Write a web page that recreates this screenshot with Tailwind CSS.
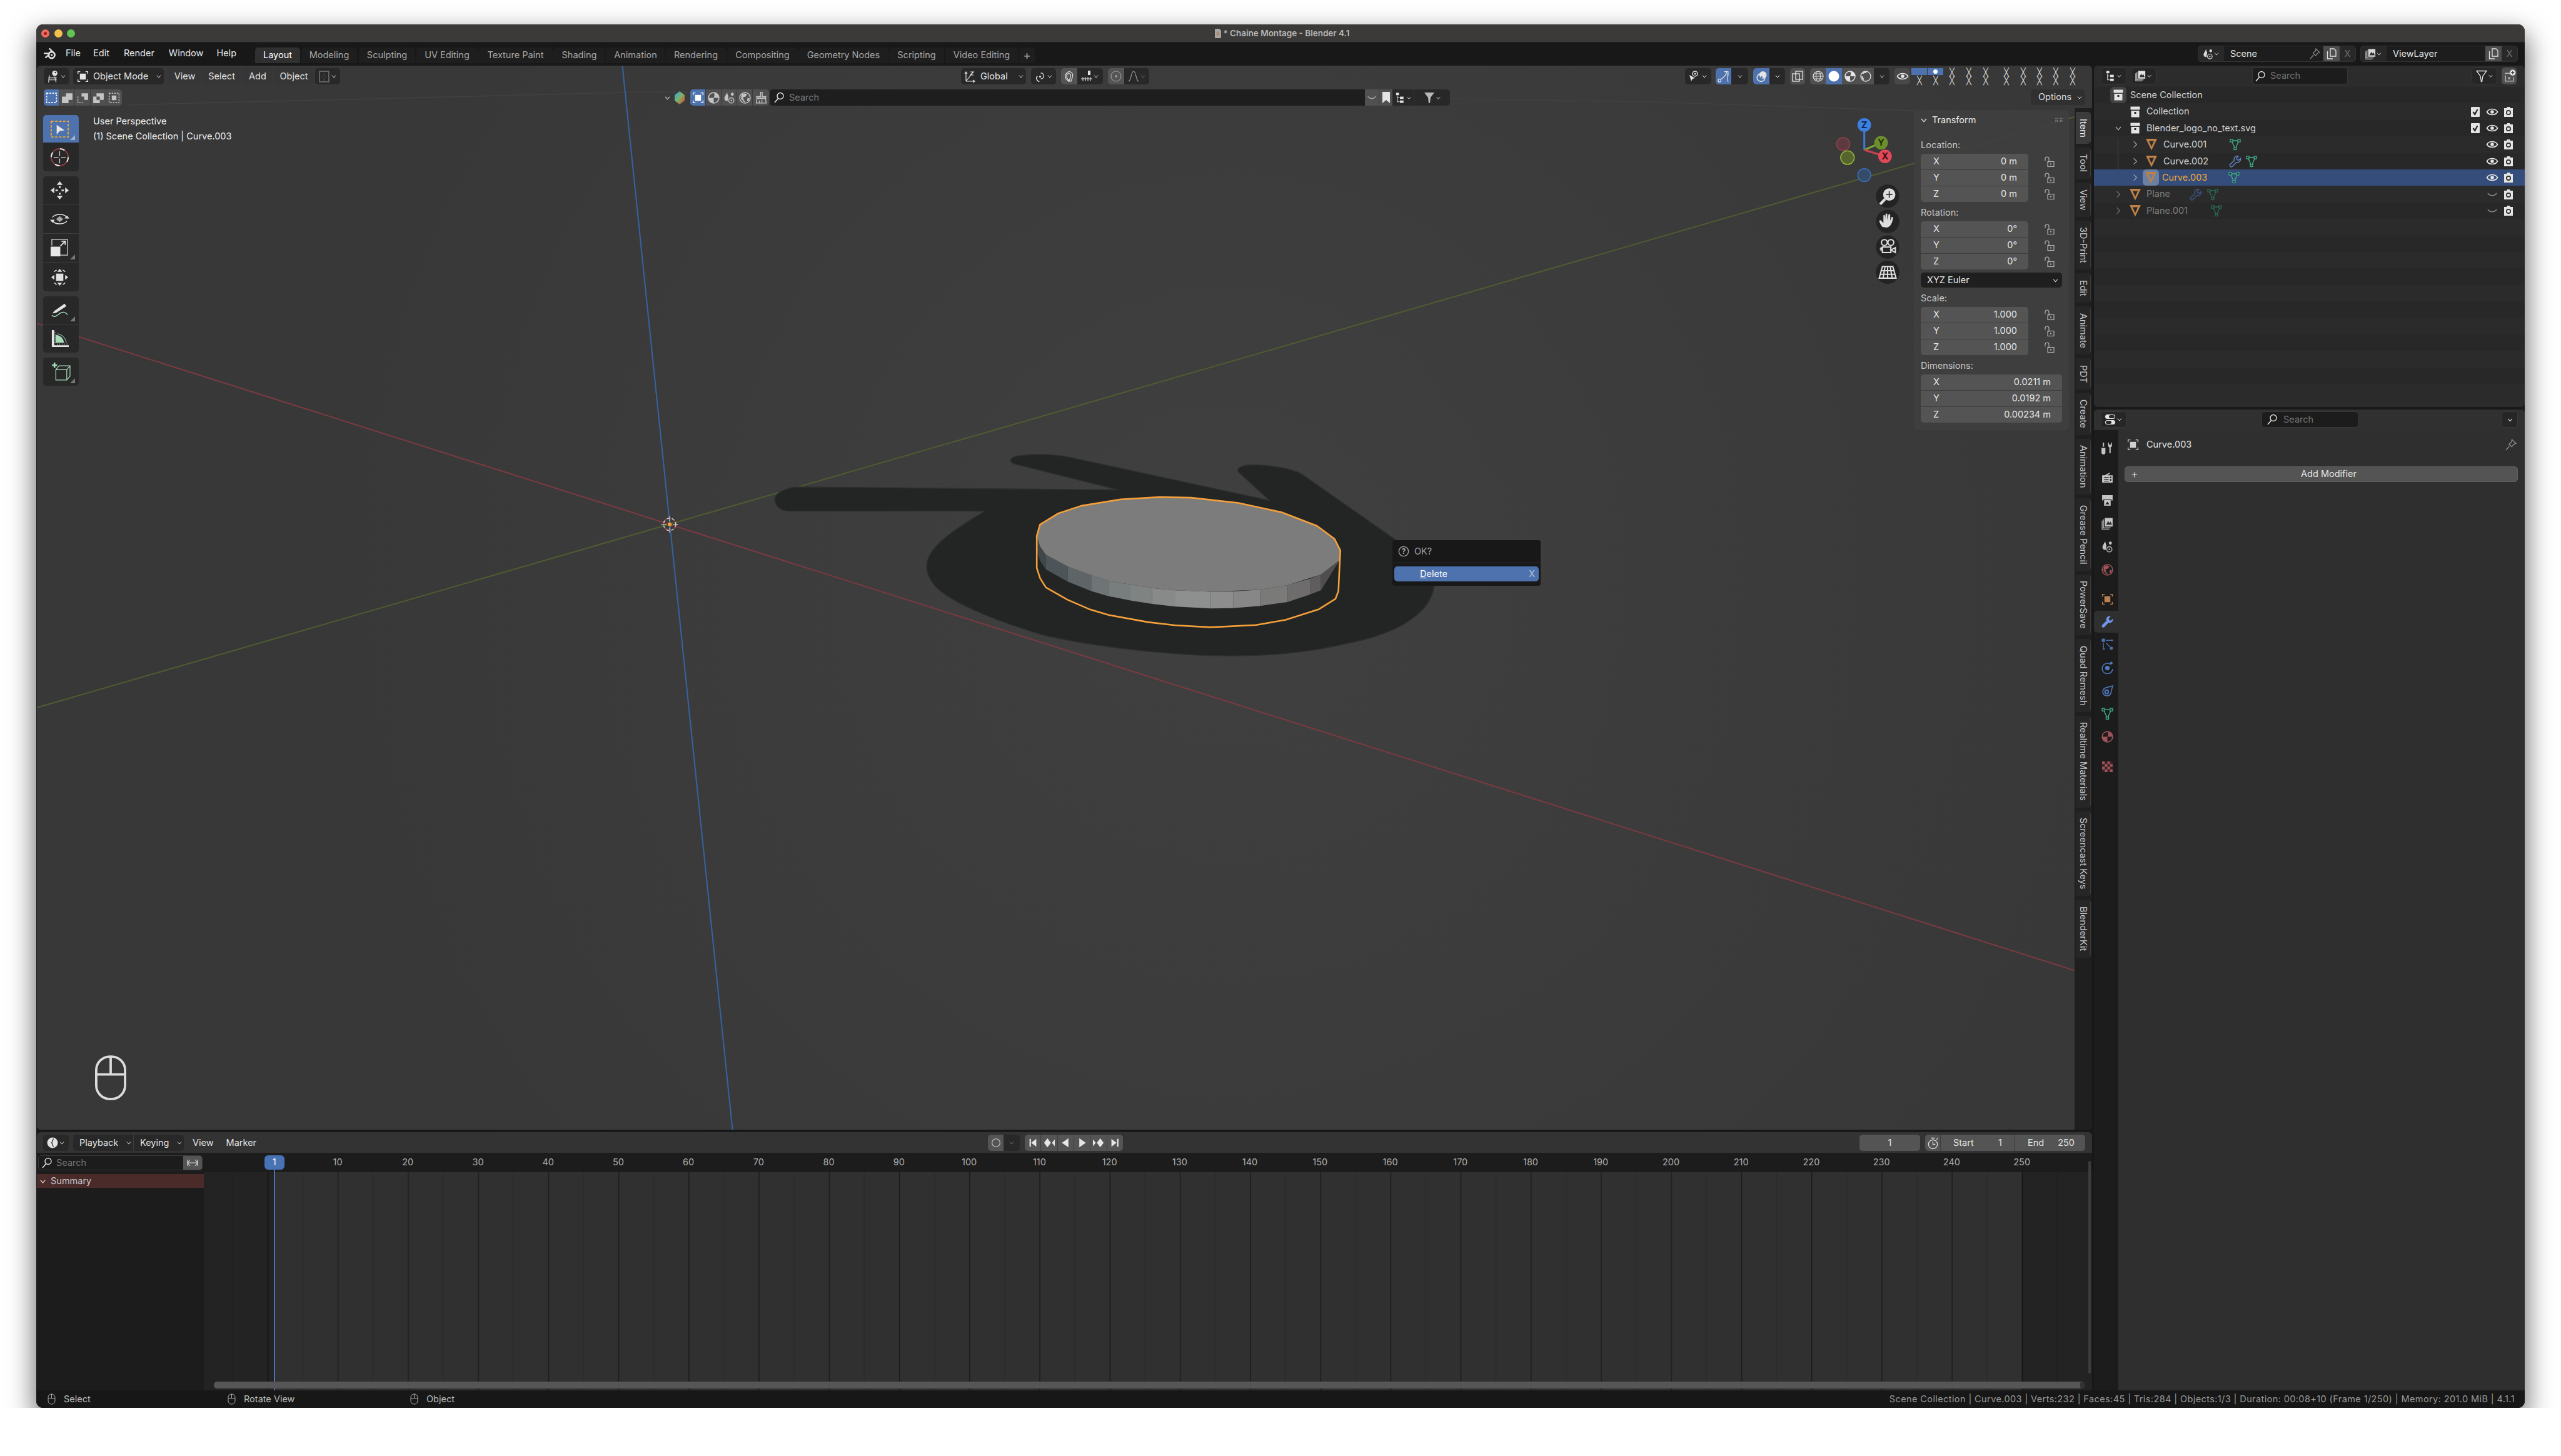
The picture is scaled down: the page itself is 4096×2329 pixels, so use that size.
<!DOCTYPE html>
<html><head><meta charset="utf-8"><title>Chaine Montage - Blender 4.1</title>
<script src="https://cdn.jsdelivr.net/npm/@tailwindcss/browser@4"></script></head>
<body class="bg-white overflow-hidden">
<svg class="hidden" width="0" height="0">
<defs>
<symbol id="chev" viewBox="0 0 20 20"><path d="M5 7.5l5 6 5-6" fill="none" stroke="currentColor" stroke-width="1.6"/></symbol>
<symbol id="chevr" viewBox="0 0 20 20"><path d="M7 4l6 6-6 6" fill="none" stroke="currentColor" stroke-width="1.4"/></symbol>
<symbol id="search" viewBox="0 0 20 20"><circle cx="12" cy="7.5" r="5" fill="none" stroke="currentColor" stroke-width="1.4"/><path d="M8.5 11.5L3 18" stroke="currentColor" stroke-width="1.6"/></symbol>
<symbol id="blogo" viewBox="0 0 20 20"><circle cx="12" cy="11.5" r="4.7" fill="none" stroke="currentColor" stroke-width="2.6"/><circle cx="12" cy="11.5" r="1.6" fill="currentColor"/><path d="M1 9h7M9 2l5 5M3 15l5-4" stroke="currentColor" stroke-width="2.2" stroke-linecap="round"/></symbol>
<symbol id="v3d" viewBox="0 0 20 20"><circle cx="12" cy="5" r="4" fill="currentColor"/><circle cx="13" cy="3.8" r="1.2" fill="#333"/><path d="M2 12h13M4 8l-1.500 11M12 10l2 9M2 15h13" stroke="currentColor" stroke-width="1.1" fill="none"/></symbol>
<symbol id="obj" viewBox="0 0 20 20"><path d="M2.500 6V2.500H6M14 2.500h3.500V6M17.500 14v3.500H14M6 17.500H2.500V14" fill="none" stroke="currentColor" stroke-width="1.3"/><rect x="5.500" y="5.500" width="9" height="9" fill="currentColor"/></symbol>
<symbol id="bolt" viewBox="0 0 20 20"><rect x="3" y="2" width="14" height="16" fill="none" stroke="#666" stroke-width="1.8"/><path d="M11 4L7 10.500h3L9 17l4-8h-3z" fill="#1f1f1f" stroke="#555" stroke-width=".6"/></symbol>
<symbol id="sset" viewBox="0 0 20 20"><rect x="2.500" y="3" width="15" height="14" fill="none" stroke="currentColor" stroke-width="1.5" stroke-dasharray="2.500 1.800"/></symbol>
<symbol id="sext" viewBox="0 0 20 20"><path d="M2 8h6V3h10v10h-6v5H2z" fill="currentColor"/></symbol>
<symbol id="ssub" viewBox="0 0 20 20"><path d="M8 3h10v10h-6V8H8z" fill="currentColor"/><path d="M2.500 8v9.500H12" fill="none" stroke="currentColor" stroke-width="1.400" stroke-dasharray="2.200 1.600"/></symbol>
<symbol id="sdif" viewBox="0 0 20 20"><path fill-rule="evenodd" d="M7 3h11v10h-6v5H2V8h5zM7 8v5h5V8z" fill="currentColor"/></symbol>
<symbol id="sint" viewBox="0 0 20 20"><rect x="2.500" y="3" width="15" height="14" fill="none" stroke="currentColor" stroke-width="1.400" stroke-dasharray="2.200 1.800"/><rect x="6.500" y="6.500" width="7" height="7" fill="currentColor"/></symbol>
<symbol id="mat" viewBox="0 0 20 20"><circle cx="10" cy="10" r="8" fill="none" stroke="currentColor" stroke-width="1.500"/><path d="M10 2a8 8 0 0 1 0 8h8a8 8 0 0 0-8-8zM10 10H2a8 8 0 0 0 8 8z" fill="currentColor"/></symbol>
<symbol id="scene" viewBox="0 0 20 20"><path d="M6.500 2C5 6 2.500 8 2.500 11a4 4 0 0 0 5 3.800C7 12 9 9.500 8.500 8z" fill="currentColor"/><circle cx="14.500" cy="4.500" r="2.300" fill="currentColor"/><circle cx="13" cy="14" r="4" fill="none" stroke="currentColor" stroke-width="1.300"/><circle cx="13" cy="14" r="1.200" fill="currentColor"/></symbol>
<symbol id="world" viewBox="0 0 20 20"><circle cx="10" cy="10" r="8" fill="none" stroke="currentColor" stroke-width="1.400"/><path d="M5 4l5-1 3 2-2 3-4 1 1 4 3 4-3-1-4-5zM14 10l3 1-2 4-2-1z" fill="currentColor"/></symbol>
<symbol id="brush" viewBox="0 0 20 20"><path d="M9 1.500h2.500V8H17v2H3V8h6zM3.500 11h13l1 7h-15zM7 14v4M11 13v5" fill="none" stroke="currentColor" stroke-width="1.300"/></symbol>
<symbol id="xf" viewBox="0 0 20 20"><path d="M4 18V3M2 6l2-3 2 3M4 18h14M15 16l3 2-3 2M4 18L15 4M11 3h5l-5 5h5" fill="none" stroke="currentColor" stroke-width="1.200"/></symbol>
<symbol id="pivot" viewBox="0 0 20 20"><path d="M11 4.500a4.500 4.500 0 1 1 0 9M9 17.500A5 5 0 0 1 6 9" fill="none" stroke="currentColor" stroke-width="1.300"/><circle cx="10" cy="10" r="1.500" fill="currentColor"/></symbol>
<symbol id="magnet" viewBox="0 0 20 20"><path d="M9 18c-3-2-6-5-5-9 1-5 5-7 8-6s5 5 3 9l-2 6h-3l2-7c1-3 0-5-1-5-2-1-4 0-5 3-.5 3 1 5 3 7z" fill="none" stroke="currentColor" stroke-width="1.200"/></symbol>
<symbol id="snap" viewBox="0 0 20 20"><rect x="12" y="1" width="4" height="7" fill="currentColor"/><path d="M1 14h18M4 11v7M8 11v7M12 11v7M16 11v7" stroke="currentColor" stroke-width="1"/></symbol>
<symbol id="prop" viewBox="0 0 20 20"><circle cx="10" cy="10" r="8" fill="none" stroke="currentColor" stroke-width="1.200"/><circle cx="10" cy="10" r="2" fill="currentColor"/></symbol>
<symbol id="curve" viewBox="0 0 20 20"><path d="M2 18c4 0 4-16 8-16s4 16 8 16" fill="none" stroke="currentColor" stroke-width="1.200"/></symbol>
<symbol id="bookmark" viewBox="0 0 20 20"><path d="M4 1h12v18l-6-5-6 5z" fill="currentColor"/></symbol>
<symbol id="tree" viewBox="0 0 20 20"><rect x="3" y="1.500" width="5" height="4" fill="currentColor"/><rect x="9.500" y="8" width="6" height="4" fill="currentColor"/><rect x="9.500" y="14.500" width="6" height="4" fill="currentColor"/><path d="M5 6v10.500h4M5 10h4" fill="none" stroke="currentColor" stroke-width="1.100"/></symbol>
<symbol id="funnel" viewBox="0 0 20 20"><path d="M2 2h16l-6 8-1 9h-2L8 10z" fill="currentColor"/></symbol>
<symbol id="funnelo" viewBox="0 0 20 20"><path d="M2 2h16l-6 8-1.500 9h-1L8 10z" fill="none" stroke="currentColor" stroke-width="1.300"/></symbol>
<symbol id="selectable" viewBox="0 0 20 20"><path d="M2 8l3 10 2-4 4-1z" fill="currentColor"/><circle cx="11" cy="6" r="4" fill="none" stroke="currentColor" stroke-width="1.500"/><circle cx="11" cy="6" r="1.500" fill="currentColor"/></symbol>
<symbol id="gizmo" viewBox="0 0 20 20"><circle cx="4" cy="16" r="2.200" fill="none" stroke="currentColor" stroke-width="1.200"/><path d="M6 14C11 11 14 8 15 3M11 2.500h6v6M17 3c-1 7-1 11 0 15" fill="none" stroke="currentColor" stroke-width="1.200"/></symbol>
<symbol id="overlay" viewBox="0 0 20 20"><circle cx="9" cy="11.500" r="6" fill="none" stroke="currentColor" stroke-width="1.500"/><circle cx="12" cy="7.500" r="5.500" fill="currentColor"/><circle cx="10" cy="11" r="1.500" fill="#4d72ae"/></symbol>
<symbol id="xray" viewBox="0 0 20 20"><rect x="7" y="2" width="11" height="13" fill="none" stroke="currentColor" stroke-width="1.300"/><rect x="2" y="6" width="11" height="12" fill="none" stroke="currentColor" stroke-width="1.300"/></symbol>
<symbol id="wire" viewBox="0 0 20 20"><circle cx="10" cy="10" r="8" fill="none" stroke="currentColor" stroke-width="1.200"/><ellipse cx="10" cy="10" rx="3.500" ry="8" fill="none" stroke="currentColor" stroke-width="1"/><path d="M2 10h16M3.500 6h13M3.500 14h13" stroke="currentColor" stroke-width="1"/></symbol>
<symbol id="solid" viewBox="0 0 20 20"><circle cx="10" cy="10" r="8.500" fill="currentColor"/></symbol>
<symbol id="render" viewBox="0 0 20 20"><circle cx="10" cy="10" r="8" fill="none" stroke="currentColor" stroke-width="1.300"/><path d="M5 6a6 6 0 0 1 6-2M4 10a6 6 0 0 0 3 5" fill="none" stroke="currentColor" stroke-width="1.800"/></symbol>
<symbol id="eye" viewBox="0 0 20 20"><path d="M1.500 10C5 4 15 4 18.500 10 15 16 5 16 1.500 10z" fill="none" stroke="currentColor" stroke-width="1.700"/><circle cx="10" cy="10" r="2.800" fill="currentColor"/></symbol>
<symbol id="eyeh" viewBox="0 0 20 20"><path d="M3 8c3 5 11 5 14 0" fill="none" stroke="currentColor" stroke-width="1.500"/></symbol>
<symbol id="cam" viewBox="0 0 20 20"><path d="M3 4h4l1-2h4l1 2h4v14H3z" fill="currentColor"/><circle cx="10" cy="11" r="4" fill="#2a2a2a"/><circle cx="10" cy="11" r="2.300" fill="currentColor"/></symbol>
<symbol id="check" viewBox="0 0 20 20"><rect x="3" y="2" width="14" height="16" fill="currentColor" rx="1"/><path d="M6.500 10l2.800 4 4.200-8" fill="none" stroke="#222" stroke-width="2.200"/></symbol>
<symbol id="coll" viewBox="0 0 20 20"><rect x="2.500" y="1.500" width="15" height="5" fill="currentColor"/><rect x="3.500" y="8" width="13" height="10.500" fill="currentColor"/><rect x="8.500" y="10" width="3" height="3" fill="#2a2a2a"/></symbol>
<symbol id="mesh" viewBox="0 0 20 20"><path fill-rule="evenodd" d="M1 1h18l-9 18.500zM6 4.500L10 13.500l4-9z" fill="currentColor"/></symbol>
<symbol id="data" viewBox="0 0 20 20"><path d="M4 4h12l-6 13z" fill="none" stroke="currentColor" stroke-width="1.300"/><g fill="#2a2a2a" stroke="currentColor" stroke-width="1.200"><rect x="2" y="2" width="4" height="4"/><rect x="14" y="2" width="4" height="4"/><rect x="8" y="15" width="4" height="3.500"/></g></symbol>
<symbol id="wrench" viewBox="0 0 20 20"><path d="M13 1.500a5 5 0 0 0-4.500 7L2 15a2.300 2.300 0 0 0 3.300 3.200l6.500-6.700a5 5 0 0 0 6.500-6l-3 2.800-2.500-.8-.7-2.500 2.700-3a5 5 0 0 0-1.800-.5z" fill="currentColor"/></symbol>
<symbol id="wrencho" viewBox="0 0 20 20"><path d="M13 1.500a5 5 0 0 0-4.500 7L2 15a2.300 2.300 0 0 0 3.300 3.200l6.500-6.700a5 5 0 0 0 6.500-6l-3 2.800-2.500-.8-.7-2.500 2.700-3a5 5 0 0 0-1.800-.5z" fill="none" stroke="currentColor" stroke-width="1.500"/></symbol>
<symbol id="lock" viewBox="0 0 20 20"><path d="M3 8V5a3 3 0 0 1 6 0v6" fill="none" stroke="currentColor" stroke-width="1.100"/><rect x="7" y="9.500" width="10" height="8" fill="none" stroke="currentColor" stroke-width="1.100"/><rect x="11" y="12.500" width="2" height="2" fill="currentColor"/></symbol>
<symbol id="layer" viewBox="0 0 20 20"><rect x="6" y="1.500" width="12" height="13" fill="currentColor"/><path d="M8 12l3-6 2 3 2-2 2 5z" fill="#333"/><path d="M4 3.500v13h11M2 5.500v13h11" fill="none" stroke="currentColor" stroke-width="1.100"/></symbol>
<symbol id="pin" viewBox="0 0 20 20"><path d="M3 18l5-6M12 2l6 6-3 1-3.500 4-4-4L11.500 5.500z" fill="none" stroke="currentColor" stroke-width="1.200"/></symbol>
<symbol id="copy" viewBox="0 0 20 20"><path d="M8 2h6l3 3v9H8z" fill="none" stroke="currentColor" stroke-width="1.300"/><path d="M3.500 6v12H12" fill="none" stroke="currentColor" stroke-width="1.300"/></symbol>
<symbol id="newcoll" viewBox="0 0 20 20"><circle cx="15" cy="5" r="4.500" fill="#e6e6e6"/><path d="M15 2.500v5M12.500 5h5" stroke="#333" stroke-width="1.200"/><path d="M3 6h8M4 9v9h12v-6" fill="none" stroke="currentColor" stroke-width="1.300"/><rect x="8" y="12" width="3" height="3" fill="currentColor"/></symbol>
<symbol id="toggles" viewBox="0 0 20 20"><rect x="2" y="2" width="16" height="7" rx="3.500" fill="currentColor"/><rect x="8" y="3" width="9" height="5" rx="2.500" fill="#2a2a2a"/><rect x="2" y="11" width="16" height="7" rx="3.500" fill="currentColor"/><rect x="3" y="12" width="9" height="5" rx="2.500" fill="#2a2a2a"/></symbol>
<symbol id="tool" viewBox="0 0 20 20"><path d="M4 2v6M2 11h4v6a2 2 0 0 1-4 0z" stroke="currentColor" stroke-width="2" fill="currentColor"/><path d="M11 2v4a3 3 0 0 0 2 3v9h2V9a3 3 0 0 0 2-3V2l-1.500 0v3h-3V2z" fill="currentColor"/></symbol>
<symbol id="rprop" viewBox="0 0 20 20"><path d="M2 7h4l7-4 1 1-4 3h8v11H2z" fill="currentColor"/><path d="M5 10h7M5 13h7M5 16h7" stroke="#1c1c1c" stroke-width="1"/><circle cx="15" cy="10" r="1.300" fill="#1c1c1c"/><circle cx="15" cy="14" r="1.300" fill="#1c1c1c"/></symbol>
<symbol id="output" viewBox="0 0 20 20"><path d="M2 2h16v8h-2v-2H4v2H2z" fill="currentColor"/><path d="M5 9h10v9H5z" fill="currentColor"/><path d="M7 16l3-4 3 4z" fill="#1c1c1c"/></symbol>
<symbol id="particles" viewBox="0 0 20 20"><circle cx="4" cy="4" r="2.800" fill="currentColor"/><circle cx="16" cy="16" r="2.500" fill="currentColor"/><circle cx="4.500" cy="17" r="1.500" fill="currentColor"/><circle cx="17" cy="4" r="1.500" fill="currentColor"/><path d="M8 4h8M4 8v8M8 8l6 6" stroke="currentColor" stroke-width="1.300"/></symbol>
<symbol id="physics" viewBox="0 0 20 20"><path d="M15 5.500a8 8 0 1 0 3 7" fill="none" stroke="currentColor" stroke-width="1.400"/><circle cx="10" cy="11" r="3.500" fill="currentColor"/><circle cx="16" cy="3.500" r="2" fill="currentColor"/></symbol>
<symbol id="constr" viewBox="0 0 20 20"><path d="M3 12a6.500 6.500 0 0 0 12 3L18 3 7 6a6.500 6.500 0 0 0-4 6z" fill="none" stroke="currentColor" stroke-width="1.500"/><circle cx="9" cy="12" r="2.700" fill="none" stroke="currentColor" stroke-width="2"/></symbol>
<symbol id="checker" viewBox="0 0 20 20"><rect x="2" y="2" width="16" height="16" fill="#3a2428"/><path d="M2 2h4v4H2zM10 2h4v4h-4zM6 6h4v4H6zM14 6h4v4h-4zM2 10h4v4H2zM10 10h4v4h-4zM6 14h4v4H6zM14 14h4v4h-4z" fill="currentColor"/></symbol>
<symbol id="mouse" viewBox="0 0 20 28"><rect x="1.500" y="1.500" width="17" height="25" rx="8" fill="none" stroke="currentColor" stroke-width="1.400"/><path d="M1.500 12h17M10 1.500V12" stroke="currentColor" stroke-width="1.400"/></symbol>
<symbol id="action" viewBox="0 0 20 20"><circle cx="10" cy="10" r="8.500" fill="currentColor"/><path d="M11 3l-3 7 3 7 1-1-2.500-6L12 4z" fill="#2a2a2a"/></symbol>
</defs>
</svg>

<div class="ml-[58px] mt-[39px] w-[3980px] h-[2213px] flex flex-col rounded-[11px] overflow-hidden bg-[#181818] shadow-[0_18px_40px_4px_rgba(0,0,0,0.55)] [font-family:Inter,sans-serif] text-[14.5px] leading-none text-[#e4e4e4]">

  <!-- title bar -->
  <div class="relative h-[30px] shrink-0 bg-[#3b3a38] flex items-center border-b border-black">
    <div class="flex gap-[7.700px] ml-[8px]">
      <span class="w-[13px] h-[13px] rounded-full bg-[#ef6a5e] flex items-center justify-center"><span class="w-[5px] h-[5px] rounded-full bg-[#96231a]"></span></span>
      <span class="w-[13px] h-[13px] rounded-full bg-[#f5bf4f]"></span>
      <span class="w-[13px] h-[13px] rounded-full bg-[#61c554]"></span>
    </div>
    <div class="ml-[1823px] flex items-center gap-[3px]">
      <svg width="10" height="15" viewBox="0 0 10 15"><path d="M0 1a1 1 0 0 1 1-1h6l3 3v11a1 1 0 0 1-1 1H1a1 1 0 0 1-1-1z" fill="#a4a4a4"/><circle cx="5" cy="8" r="2" fill="none" stroke="#c06a20" stroke-width="1"/></svg>
      <span class="text-[13.500px] font-semibold text-[#b8b8b8]">* Chaine Montage - Blender 4.1</span>
    </div>
  </div>

  <!-- top bar -->
  <div class="relative h-[36px] shrink-0 bg-[#181818] flex items-start">
    <svg class="ml-[12px] mt-[7px] text-[#e0e0e0]" width="21" height="21"><use href="#blogo"/></svg>
    <div class="flex text-[#e6e6e6] h-[36px] items-center pb-[3px]">
      <span class="ml-[14px]">File</span><span class="ml-[20px]">Edit</span><span class="ml-[23px]">Render</span><span class="ml-[23px]">Window</span><span class="ml-[21px]">Help</span>
    </div>
    <div class="absolute left-[350px] top-[7px] flex h-[25px] text-[#a8a8a8] items-stretch">
      <div class="w-[72px] bg-[#303030] rounded-t-[5px] flex items-center justify-center text-white">Layout</div>
      <div class="ml-[2px] w-[89px] bg-[#1e1e1e] rounded-t-[5px] flex items-center justify-center">Modeling</div>
      <div class="ml-[3px] w-[90px] bg-[#1e1e1e] rounded-t-[5px] flex items-center justify-center">Sculpting</div>
      <div class="ml-[2px] w-[98px] bg-[#1e1e1e] rounded-t-[5px] flex items-center justify-center">UV Editing</div>
      <div class="ml-[1px] w-[119px] bg-[#1e1e1e] rounded-t-[5px] flex items-center justify-center">Texture Paint</div>
      <div class="ml-[1px] w-[83px] bg-[#1e1e1e] rounded-t-[5px] flex items-center justify-center">Shading</div>
      <div class="ml-[1px] w-[95px] bg-[#1e1e1e] rounded-t-[5px] flex items-center justify-center">Animation</div>
      <div class="ml-[1px] w-[96px] bg-[#1e1e1e] rounded-t-[5px] flex items-center justify-center">Rendering</div>
      <div class="ml-[2px] w-[113px] bg-[#1e1e1e] rounded-t-[5px] flex items-center justify-center">Compositing</div>
      <div class="ml-[1px] w-[144px] bg-[#1e1e1e] rounded-t-[5px] flex items-center justify-center">Geometry Nodes</div>
      <div class="ml-[1px] w-[88px] bg-[#1e1e1e] rounded-t-[5px] flex items-center justify-center">Scripting</div>
      <div class="ml-[2px] w-[116px] bg-[#1e1e1e] rounded-t-[5px] flex items-center justify-center">Video Editing</div>
      <div class="ml-[2px] w-[25px] bg-[#1e1e1e] rounded-t-[5px] flex items-center justify-center text-[19px]">+</div>
    </div>
    <!-- scene / view layer -->
    <div class="absolute left-[3457px] top-[4px] h-[26px] w-[253px] flex rounded-[5px] overflow-hidden bg-[#282828] border border-[#333]">
      <div class="w-[41px] flex items-center justify-center text-[#d8d8d8]"><svg width="19" height="19"><use href="#scene"/></svg><svg class="-ml-[2px]" width="12" height="12"><use href="#chev"/></svg></div>
      <div class="w-[159px] bg-[#1d1d1d] flex items-center pl-[10px] relative">Scene<svg class="absolute right-[4px] text-[#8a8a8a]" width="20" height="20"><use href="#pin"/></svg></div>
      <div class="w-[26px] bg-[#4e4e4e] flex items-center justify-center"><svg width="20" height="20"><use href="#copy"/></svg></div>
      <div class="flex-1 flex items-center justify-center text-[#6f6f6f]">X</div>
    </div>
    <div class="absolute left-[3717px] top-[4px] h-[26px] w-[252px] flex rounded-[5px] overflow-hidden bg-[#282828] border border-[#333]">
      <div class="w-[41px] flex items-center justify-center text-[#d8d8d8]"><svg width="19" height="19"><use href="#layer"/></svg><svg class="-ml-[2px]" width="12" height="12"><use href="#chev"/></svg></div>
      <div class="w-[158px] bg-[#1d1d1d] flex items-center pl-[10px]">ViewLayer</div>
      <div class="w-[26px] bg-[#4e4e4e] flex items-center justify-center"><svg width="20" height="20"><use href="#copy"/></svg></div>
      <div class="flex-1 flex items-center justify-center text-[#6f6f6f]">X</div>
    </div>
  </div>

  <!-- main -->
  <div class="flex-1 min-h-0 flex pl-[1px]">
    <!-- left column -->
    <div class="w-[3287px] shrink-0 flex flex-col gap-[4px]">

      <!-- 3D viewport -->
      <div class="relative h-[1702px] shrink-0 rounded-[6px] overflow-hidden bg-[radial-gradient(circle_at_58%_48%,#404040,#383838_70%)]">
        <svg class="absolute inset-0" width="3287" height="1702" viewBox="116 202 6343 3285" preserveAspectRatio="none">
          <polyline points="398,323 2013,283 3600,290 5100,314 5904,341 6400,362" fill="none" stroke="#414141" stroke-width="3"/>
          <line x1="116" y1="998" x2="6457" y2="3012" stroke="#7a3a42" stroke-width="4"/>
          <line x1="116" y1="2184" x2="6457" y2="345" stroke="#4d5c30" stroke-width="4"/>
          <line x1="1923" y1="202" x2="2263" y2="3488" stroke="#35629e" stroke-width="4"/>
          <!-- shadow of the logo -->
          <path d="M2470 1503 L3455 1512 L3131 1431 C3110 1420 3125 1410 3150 1406 C3200 1400 3260 1402 3303 1411 L3921 1545 L3824 1456 C3815 1440 3850 1433 3873 1435 C3925 1436 3985 1445 4018 1462 L4315 1670 C4390 1730 4432 1770 4428 1808 C4420 1880 4340 1950 4164 1985 C4040 2015 3900 2026 3788 2024 C3640 2024 3400 2000 3230 1962 C3100 1925 2960 1870 2900 1820 C2860 1785 2850 1740 2880 1700 C2910 1655 2990 1610 3042 1577 L2430 1577 C2400 1572 2392 1550 2394 1537 C2400 1515 2440 1503 2470 1503 Z" fill="#232525" stroke="#2d2e2e" stroke-width="3" stroke-linejoin="round"/>
          <!-- disc sides -->
          <g stroke="none">
            <polygon points="3202,1654 3212,1686 3212,1730 3202,1700" fill="#3d4548"/>
            <polygon points="3212,1686 3230,1712 3230,1757 3212,1730" fill="#40484b"/>
            <polygon points="3230,1712 3297,1748 3297,1795 3230,1757" fill="#4e5559"/>
            <polygon points="3297,1748 3370,1775 3370,1824 3297,1795" fill="#5f6567"/>
            <polygon points="3370,1775 3424,1793 3424,1840 3370,1824" fill="#6f7576"/>
            <polygon points="3424,1793 3491,1804 3491,1853 3424,1840" fill="#787e7e"/>
            <polygon points="3491,1804 3558,1815 3558,1864 3491,1853" fill="#7f8483"/>
            <polygon points="3558,1815 3630,1822 3630,1872 3558,1864" fill="#878a89"/>
            <polygon points="3630,1822 3739,1826 3739,1878 3630,1872" fill="#8e908f"/>
            <polygon points="3739,1826 3808,1825 3808,1877 3739,1878" fill="#8c8d8c"/>
            <polygon points="3808,1825 3891,1820 3891,1870 3808,1877" fill="#868786"/>
            <polygon points="3891,1820 3976,1806 3976,1858 3891,1870" fill="#7a7a79"/>
            <polygon points="3976,1806 4045,1786 4045,1835 3976,1858" fill="#6e6c6c"/>
            <polygon points="4045,1786 4079,1773 4079,1822 4045,1835" fill="#605d5e"/>
            <polygon points="4079,1773 4137,1728 4079,1822" fill="#514e50"/>
          </g>
          <polygon points="3202,1654 3212,1619 3267,1585 3339,1561 3461,1541 3582,1534 3679,1536 3824,1552 3958,1581 4067,1623 4121,1663 4139,1699 4137,1728 4079,1773 3976,1806 3891,1820 3739,1826 3630,1822 3558,1815 3424,1793 3370,1775 3297,1748 3230,1712 3212,1686" fill="#7b7c7b"/>
          <polygon points="3202,1654 3212,1619 3267,1585 3339,1561 3461,1541 3582,1534 3679,1536 3824,1552 3958,1581 4067,1623 4121,1663 4139,1699 4136,1757 4133,1824 4124,1848 4073,1880 3970,1913 3879,1929 3739,1936 3630,1930 3545,1920 3424,1898 3364,1880 3297,1851 3230,1813 3212,1784 3202,1753" fill="none" stroke="#f5a03a" stroke-width="5" stroke-linejoin="round"/>
          <!-- 3D cursor -->
          <circle cx="2069" cy="1618" r="19" fill="none" stroke="#d8d8d8" stroke-width="3" stroke-dasharray="9 7"/>
          <circle cx="2069" cy="1618" r="19" fill="none" stroke="#b04a4a" stroke-width="3" stroke-dasharray="7 9" stroke-dashoffset="9"/>
          <path d="M2069 1592V1608M2069 1628V1644M2043 1618H2059M2079 1618H2095" stroke="#c8c8c8" stroke-width="2.500"/>
          <circle cx="2069" cy="1618" r="6" fill="#f39c32"/>
          <!-- nav gizmo -->
          <line x1="5756" y1="462" x2="5756" y2="385" stroke="#3a79d6" stroke-width="6"/>
          <line x1="5756" y1="462" x2="5808" y2="440" stroke="#7ba33a" stroke-width="6"/>
          <line x1="5756" y1="462" x2="5820" y2="482" stroke="#c9424e" stroke-width="6"/>
          <circle cx="5691" cy="444" r="20" fill="#5d3a40" stroke="#93404c" stroke-width="3"/>
          <circle cx="5704" cy="486" r="21" fill="#56652f" stroke="#90b83a" stroke-width="3"/>
          <circle cx="5756" cy="540" r="20" fill="#364b68" stroke="#3a70bd" stroke-width="3"/>
          <circle cx="5756" cy="385" r="21" fill="#3c80e0"/>
          <circle cx="5808" cy="440" r="21" fill="#6c8f2e"/>
          <circle cx="5820" cy="482" r="21" fill="#e04a58"/>
          <text x="5756" y="395" text-anchor="middle" font-family="Inter" font-size="28" font-weight="700" fill="#102448">Z</text>
          <text x="5808" y="450" text-anchor="middle" font-family="Inter" font-size="28" font-weight="700" fill="#1f2c0a">Y</text>
          <text x="5820" y="492" text-anchor="middle" font-family="Inter" font-size="28" font-weight="700" fill="#3c0c12">X</text>
          <!-- nav buttons -->
          <g fill="#232323"><circle cx="5828" cy="605" r="36"/><circle cx="5828" cy="683" r="36"/><circle cx="5828" cy="762" r="36"/><circle cx="5828" cy="840" r="36"/></g>
          <g fill="none" stroke="#dedede" stroke-width="4">
            <circle cx="5833" cy="600" r="17" fill="#dedede"/><path d="M5820 614L5805 630" stroke-width="8"/><path d="M5833 590v20M5823 600h20" stroke="#232323" stroke-width="3"/>
            <path d="M5812 700c-6-8-10-16-10-20l5-1 8 9V664h5v15l2-20h5v20l4-18h5v20l4-12 5 1c-2 14-6 30-20 32z" fill="#dedede" stroke="none"/>
            <circle cx="5818" cy="748" r="9"/><circle cx="5838" cy="748" r="9"/><rect x="5812" y="762" width="26" height="17"/><path d="M5838 771l14-7v15z"/><path d="M5804 768h8M5808 762v12"/>
            <path d="M5812 822h32l10 36h-52zM5828 822v36M5820 822l-6 36M5836 822l6 36M5806 835h44M5804 846h48"/>
          </g>
        </svg>

        <!-- header row 1 -->
        <div class="relative flex items-start pt-[4px] h-[38px]">
          <div class="ml-[11px] w-[41px] h-[26px] rounded-[5px] bg-[#282828] flex items-center justify-center"><svg width="21" height="21"><use href="#v3d"/></svg><svg class="-ml-[1px]" width="12" height="12"><use href="#chev"/></svg></div>
          <div class="ml-[6px] w-[145px] h-[26px] rounded-[5px] bg-[#282828] flex items-center pl-[5px]"><svg width="21" height="21"><use href="#obj"/></svg><span class="ml-[6px]">Object Mode</span><svg class="ml-auto mr-[2px]" width="12" height="12"><use href="#chev"/></svg></div>
          <div class="ml-[8px] w-[51px] h-[26px] rounded-[5px] bg-[#363636] flex items-center justify-center">View</div>
          <div class="ml-[3px] w-[61px] h-[26px] rounded-[5px] bg-[#363636] flex items-center justify-center">Select</div>
          <div class="ml-[4px] w-[46px] h-[26px] rounded-[5px] bg-[#363636] flex items-center justify-center">Add</div>
          <div class="ml-[3px] w-[64px] h-[26px] rounded-[5px] bg-[#363636] flex items-center justify-center">Object</div>
          <div class="ml-[2px] w-[40px] h-[26px] rounded-[5px] bg-[#282828] flex items-center justify-center"><svg width="21" height="21"><use href="#bolt"/></svg><svg class="-ml-[1px]" width="12" height="12"><use href="#chev"/></svg></div>

          <div class="ml-[993px] w-[104px] h-[26px] rounded-[5px] bg-[#282828] flex items-center pl-[4px]"><svg width="20" height="20"><use href="#xf"/></svg><span class="ml-[7px]">Global</span><svg class="ml-auto mr-[2px]" width="12" height="12"><use href="#chev"/></svg></div>
          <div class="ml-[8px] w-[40px] h-[26px] rounded-[5px] bg-[#282828] flex items-center justify-center"><svg width="21" height="21"><use href="#pivot"/></svg><svg class="-ml-[1px]" width="12" height="12"><use href="#chev"/></svg></div>
          <div class="ml-[8px] w-[67px] h-[26px] rounded-[5px] bg-[#282828] flex overflow-hidden"><span class="w-[26px] bg-[#545454] flex items-center justify-center"><svg width="20" height="20"><use href="#magnet"/></svg></span><span class="flex-1 flex items-center justify-center"><svg width="20" height="20"><use href="#snap"/></svg><svg class="-ml-[1px]" width="12" height="12"><use href="#chev"/></svg></span></div>
          <div class="ml-[8px] w-[66px] h-[26px] rounded-[5px] bg-[#282828] flex overflow-hidden text-[#9a9a9a]"><span class="w-[26px] bg-[#545454] flex items-center justify-center"><svg width="20" height="20"><use href="#prop"/></svg></span><span class="flex-1 flex items-center justify-center"><svg width="20" height="20"><use href="#curve"/></svg><svg class="-ml-[1px] text-[#666]" width="12" height="12"><use href="#chev"/></svg></span></div>

          <div class="ml-[857px] w-[42px] h-[26px] rounded-[5px] bg-[#282828] flex items-center justify-center"><svg width="20" height="20"><use href="#selectable"/></svg><svg width="12" height="12"><use href="#chev"/></svg></div>
          <div class="ml-[7px] w-[52px] h-[26px] rounded-[5px] bg-[#282828] flex overflow-hidden"><span class="w-[25px] bg-[#4d72ae] flex items-center justify-center"><svg width="21" height="21"><use href="#gizmo"/></svg></span><span class="flex-1 flex items-center justify-center"><svg width="12" height="12"><use href="#chev"/></svg></span></div>
          <div class="ml-[8px] w-[51px] h-[26px] rounded-[5px] bg-[#282828] flex overflow-hidden"><span class="w-[26px] bg-[#4d72ae] flex items-center justify-center"><svg width="21" height="21"><use href="#overlay"/></svg></span><span class="flex-1 flex items-center justify-center"><svg width="12" height="12"><use href="#chev"/></svg></span></div>
          <div class="ml-[8px] w-[24px] h-[26px] rounded-[5px] bg-[#505050] flex items-center justify-center"><svg width="20" height="20"><use href="#xray"/></svg></div>
          <div class="ml-[8px] w-[127px] h-[26px] rounded-[5px] bg-[#282828] flex overflow-hidden"><span class="w-[25px] bg-[#505050] flex items-center justify-center"><svg width="20" height="20"><use href="#wire"/></svg></span><span class="w-[26px] bg-[#4d72ae] flex items-center justify-center text-white"><svg width="20" height="20"><use href="#solid"/></svg></span><span class="w-[25px] bg-[#505050] flex items-center justify-center"><svg width="20" height="20"><use href="#mat"/></svg></span><span class="w-[26px] bg-[#505050] flex items-center justify-center"><svg width="20" height="20"><use href="#render"/></svg></span><span class="flex-1 flex items-center justify-center"><svg width="12" height="12"><use href="#chev"/></svg></span></div>
          <div class="ml-[8px] w-[25px] h-[26px] rounded-[5px] bg-[#484848] flex items-center justify-center"><svg width="20" height="20"><use href="#eye"/></svg></div>
          <!-- collection visibility -->
          <div class="ml-[2px] w-[51px] h-[26px] grid grid-cols-2 gap-x-[1px] text-[#d8d8d8] text-[13px] text-center">
            <span class="h-[11px] bg-[#4d72ae]"></span><span class="h-[11px] bg-[#4d72ae] flex items-center justify-center"><span class="w-[7px] h-[7px] rounded-full bg-white"></span></span>
            <span class="pt-[2px]">╳</span><span class="pt-[2px]">╳</span>
          </div>
          <div class="ml-[1px] w-[80px] h-[26px] grid grid-cols-3 text-[#d8d8d8] text-[13px] text-center">
            <span>╳</span><span>╳</span><span>╳</span><span>╳</span><span>╳</span><span>╳</span>
          </div>
          <div class="ml-[7px] w-[132px] h-[26px] grid grid-cols-5 text-[#d8d8d8] text-[13px] text-center">
            <span>╳</span><span>╳</span><span>╳</span><span>╳</span><span>╳</span><span>╳</span><span>╳</span><span>╳</span><span>╳</span><span>╳</span>
          </div>
        </div>

        <!-- header row 2 -->
        <div class="relative flex items-start h-[26px]">
          <div class="ml-[11px] w-[125px] h-[26px] rounded-[5px] bg-[#505050] flex overflow-hidden divide-x divide-[#3a3a3a] text-[#c4c4c4]">
            <span class="w-[25px] bg-[#4d72ae] flex items-center justify-center text-white"><svg width="21" height="21"><use href="#sset"/></svg></span>
            <span class="w-[25px] flex items-center justify-center"><svg width="21" height="21"><use href="#sext"/></svg></span>
            <span class="w-[25px] flex items-center justify-center"><svg width="21" height="21"><use href="#ssub"/></svg></span>
            <span class="w-[25px] flex items-center justify-center"><svg width="21" height="21"><use href="#sdif"/></svg></span>
            <span class="w-[25px] flex items-center justify-center"><svg width="21" height="21"><use href="#sint"/></svg></span>
          </div>
          <svg class="ml-[866px] mt-[7px]" width="13" height="13"><use href="#chev"/></svg>
          <svg class="ml-[3px] mt-[3px]" width="20" height="21" viewBox="0 0 20 21"><defs><linearGradient id="rb" x1="0" y1="0" x2="1" y2="1"><stop offset="0" stop-color="#29a4e8"/><stop offset=".5" stop-color="#7eb36a"/><stop offset="1" stop-color="#e03a20"/></linearGradient></defs><path d="M10 0l8 6v9l-8 6-8-6V6z" fill="url(#rb)"/></svg>
          <div class="ml-[7px] w-[126px] h-[26px] rounded-[5px] bg-[#505050] flex overflow-hidden divide-x divide-[#3a3a3a] text-[#c4c4c4]">
            <span class="w-[25px] bg-[#4d72ae] flex items-center justify-center text-white"><svg width="21" height="21"><use href="#obj"/></svg></span>
            <span class="w-[25px] flex items-center justify-center"><svg width="21" height="21"><use href="#mat"/></svg></span>
            <span class="w-[25px] flex items-center justify-center"><svg width="21" height="21"><use href="#scene"/></svg></span>
            <span class="w-[25px] flex items-center justify-center"><svg width="21" height="21"><use href="#world"/></svg></span>
            <span class="w-[26px] flex items-center justify-center"><svg width="21" height="21"><use href="#brush"/></svg></span>
          </div>
          <div class="ml-[1px] w-[952px] h-[26px] rounded-l-[5px] bg-[#1e1e1e] flex items-center pl-[5px] text-[#7a7a7a]"><svg class="text-[#e4e4e4]" width="20" height="20"><use href="#search"/></svg><span class="ml-[6px]">Search</span></div>
          <div class="w-[136px] h-[26px] rounded-r-[5px] bg-[#282828] flex overflow-hidden">
            <span class="w-[22px] bg-[#505050] flex items-center justify-center"><svg class="text-[#aaa]" width="18" height="18"><use href="#eyeh"/></svg></span>
            <span class="w-[22px] bg-[#505050] flex items-center justify-center border-l border-[#3a3a3a]"><svg width="20" height="20"><use href="#bookmark"/></svg></span>
            <span class="w-[34px] flex items-center justify-center"><svg width="19" height="19"><use href="#tree"/></svg><svg class="-ml-[1px]" width="11" height="11"><use href="#chev"/></svg></span>
            <span class="flex-1 flex items-center justify-center border-l border-[#3a3a3a]"><svg class="text-[#b8b8b8]" width="20" height="22"><use href="#funnel"/></svg><svg class="-ml-[1px]" width="11" height="11"><use href="#chev"/></svg></span>
          </div>
          <div class="absolute left-[3189px] top-0 w-[87px] h-[25px] rounded-[5px] bg-[#303030] flex items-center pl-[12px] text-[#dedede]">Options<svg class="ml-auto mr-[3px]" width="12" height="12"><use href="#chev"/></svg></div>
        </div>

        <!-- tool shelf -->
        <div class="absolute left-[10px] top-[79px] w-[56.500px] flex flex-col gap-[8px] text-[#dedede]">
          <div class="rounded-[5px] bg-[#282828] overflow-hidden">
            <div class="relative h-[44px] bg-[#4d72ae] flex items-center pl-[11px]"><svg width="31" height="31" viewBox="0 0 32 32"><rect x="2" y="3" width="28" height="26" fill="none" stroke="#f0a830" stroke-width="2" stroke-dasharray="4 2.500"/><path d="M11 9l13 9-8 1-5 6z" fill="#e6e6e6"/></svg><span class="absolute right-[6px] bottom-[4px] w-0 h-0 border-l-[8px] border-l-transparent border-b-[8px] border-b-[#a0b0c8]"></span></div>
            <div class="h-[46px] flex items-center pl-[11px]"><svg width="31" height="31" viewBox="0 0 32 32"><circle cx="16" cy="16" r="14" fill="none" stroke="#8b3f42" stroke-width="2"/><circle cx="16" cy="16" r="14" fill="none" stroke="#eee" stroke-width="2" stroke-dasharray="8 14"/><path d="M16 6v8M16 18v8M6 16h8M18 16h8" stroke="#e0e0e0" stroke-width="1.200"/></svg></div>
          </div>
          <div class="rounded-[5px] bg-[#282828] overflow-hidden divide-y divide-[#3c3c3c]">
            <div class="h-[46px] flex items-center pl-[11px]"><svg width="31" height="31" viewBox="0 0 32 32" fill="#e0e0e0"><path d="M16 1l5 6H11zM16 31l-5-6h10zM1 16l6-5v10zM31 16l-6-5v10z"/><path d="M14.500 9h3v3h-3zM14.500 20h3v3h-3zM9 14.800h4v2.400H9zM19 14.800h4v2.400h-4z"/></svg></div>
            <div class="h-[46px] flex items-center pl-[11px]"><svg width="31" height="31" viewBox="0 0 32 32" fill="#e0e0e0"><path d="M4 13a13 8 0 0 1 23-1M28 19a13 8 0 0 1-23 1" fill="none" stroke="#e0e0e0" stroke-width="1.500"/><path d="M0 17l4 5 4-5zM24 15l4-5 4 5z"/><path d="M16 11l6 5-6 5-6-5z" fill="#a8a8a8"/></svg></div>
            <div class="relative h-[46px] flex items-center pl-[11px]"><svg width="31" height="31" viewBox="0 0 32 32"><path d="M3 12V2h26v26H16" fill="none" stroke="#a8a8a8" stroke-width="1.800"/><rect x="1" y="14" width="16" height="16" fill="#e6e6e6"/><path d="M17 13l8-8M19 5h6v6" fill="none" stroke="#e6e6e6" stroke-width="1.800"/></svg><span class="absolute right-[6px] bottom-[4px] w-0 h-0 border-l-[8px] border-l-transparent border-b-[8px] border-b-[#777]"></span></div>
            <div class="h-[46px] flex items-center pl-[11px]"><svg width="31" height="31" viewBox="0 0 32 32" fill="#e0e0e0"><rect x="10" y="10" width="12" height="12"/><path d="M16 2l4 5h-8zM16 30l-4-5h8zM2 16l5-4v8zM30 16l-5-4v8z"/><path d="M7 7a13 13 0 0 1 4-3M25 7a13 13 0 0 0-4-3M7 25a13 13 0 0 0 4 3M25 25a13 13 0 0 1-4 3" fill="none" stroke="#e0e0e0" stroke-width="1.500"/></svg></div>
          </div>
          <div class="rounded-[5px] bg-[#282828] overflow-hidden divide-y divide-[#3c3c3c]">
            <div class="relative h-[45px] flex items-center pl-[11px]"><svg width="31" height="31" viewBox="0 0 32 32"><path d="M7 17L24 5l3 4-17 11-6 1z" fill="#e4e4e4"/><path d="M3 24c5 5 9 0 13-3s9-3 13 2" fill="none" stroke="#a4dcb8" stroke-width="1.500"/></svg><span class="absolute right-[6px] bottom-[4px] w-0 h-0 border-l-[8px] border-l-transparent border-b-[8px] border-b-[#777]"></span></div>
            <div class="h-[45px] flex items-center pl-[11px]"><svg width="31" height="31" viewBox="0 0 32 32"><path d="M3 2h4v25h24v3H3z" fill="#e4e4e4"/><path d="M7 6h3M7 10h3M7 14h3M7 18h3M7 22h3M12 27v-3M16 27v-3M20 27v-3M24 27v-3M28 27v-3" stroke="#888" stroke-width="1"/><path d="M9 10a14 14 0 0 1 14 13H9z" fill="#a8dcb8"/><path d="M12 8a17 17 0 0 1 15 15" fill="none" stroke="#a8dcb8" stroke-width="1"/></svg></div>
          </div>
          <div class="relative h-[45px] rounded-[5px] bg-[#282828] flex items-center pl-[11px]"><svg width="33" height="33" viewBox="0 0 32 32"><path d="M3 6h8M7 2v8" stroke="#a4dcb8" stroke-width="2.500"/><path d="M9 13h17v16H9zM9 13l5-6h17v16l-5 6M26 13l5-6" fill="none" stroke="#a4dcb8" stroke-width="1.200"/></svg><span class="absolute right-[6px] bottom-[4px] w-0 h-0 border-l-[8px] border-l-transparent border-b-[8px] border-b-[#777]"></span></div>
        </div>

        <!-- viewport text -->
        <div class="absolute left-[90px] top-[82px] flex flex-col gap-[9px] text-[#f0f0f0]">
          <span>User Perspective</span>
          <span>(1) Scene Collection | Curve.003</span>
        </div>

        <!-- mouse icon -->
        <svg class="absolute left-[90px] top-[1581px] text-[#dcdcdc]" width="56" height="76" viewBox="0 0 20 28"><use href="#mouse"/></svg>

        <!-- sidebar panel -->
        <div class="absolute left-[3002px] top-[71px] w-[248px] h-[512px] rounded-[6px] bg-[#3f3f3f]/90 text-[#c6c6c6]">
          <div class="flex items-center h-[30px] mt-[1px] pl-[8px]"><svg class="text-[#e0e0e0]" width="16" height="16"><use href="#chev"/></svg><span class="ml-[5px] text-[#e8e8e8]">Transform</span><span class="ml-auto mr-[9px] text-[9px] tracking-[0px] text-[#888]">⠿⠿</span></div>
          <div class="px-[11px] flex flex-col">
            <div class="mt-[16px] h-[18px] flex items-center">Location:</div>
            <div class="mt-[5px] flex items-center">
              <div class="w-[172px] rounded-[5px] overflow-hidden flex flex-col gap-[1px] text-[#e6e6e6]">
                <div class="h-[25px] bg-[#545454] flex items-center justify-between pl-[20px] pr-[18px]"><span>X</span><span>0 m</span></div>
                <div class="h-[25px] bg-[#545454] flex items-center justify-between pl-[20px] pr-[18px]"><span>Y</span><span>0 m</span></div>
                <div class="h-[25px] bg-[#545454] flex items-center justify-between pl-[20px] pr-[18px]"><span>Z</span><span>0 m</span></div>
              </div>
              <div class="ml-[24px] flex flex-col gap-[6px] text-[#b8b8b8]"><svg width="20" height="20"><use href="#lock"/></svg><svg width="20" height="20"><use href="#lock"/></svg><svg width="20" height="20"><use href="#lock"/></svg></div>
            </div>
            <div class="mt-[8px] h-[18px] flex items-center">Rotation:</div>
            <div class="mt-[5px] flex items-center">
              <div class="w-[172px] rounded-[5px] overflow-hidden flex flex-col gap-[1px] text-[#e6e6e6]">
                <div class="h-[25px] bg-[#545454] flex items-center justify-between pl-[20px] pr-[18px]"><span>X</span><span>0°</span></div>
                <div class="h-[25px] bg-[#545454] flex items-center justify-between pl-[20px] pr-[18px]"><span>Y</span><span>0°</span></div>
                <div class="h-[25px] bg-[#545454] flex items-center justify-between pl-[20px] pr-[18px]"><span>Z</span><span>0°</span></div>
              </div>
              <div class="ml-[24px] flex flex-col gap-[6px] text-[#b8b8b8]"><svg width="20" height="20"><use href="#lock"/></svg><svg width="20" height="20"><use href="#lock"/></svg><svg width="20" height="20"><use href="#lock"/></svg></div>
            </div>
            <div class="mt-[5px] h-[24px] rounded-[5px] bg-[#1f1f1f] flex items-center pl-[10px] pr-[4px] text-[#e6e6e6]">XYZ Euler<svg class="ml-auto" width="13" height="13"><use href="#chev"/></svg></div>
            <div class="mt-[8px] h-[18px] flex items-center">Scale:</div>
            <div class="mt-[5px] flex items-center">
              <div class="w-[172px] rounded-[5px] overflow-hidden flex flex-col gap-[1px] text-[#e6e6e6]">
                <div class="h-[25px] bg-[#545454] flex items-center justify-between pl-[20px] pr-[18px]"><span>X</span><span>1.000</span></div>
                <div class="h-[25px] bg-[#545454] flex items-center justify-between pl-[20px] pr-[18px]"><span>Y</span><span>1.000</span></div>
                <div class="h-[25px] bg-[#545454] flex items-center justify-between pl-[20px] pr-[18px]"><span>Z</span><span>1.000</span></div>
              </div>
              <div class="ml-[24px] flex flex-col gap-[6px] text-[#b8b8b8]"><svg width="20" height="20"><use href="#lock"/></svg><svg width="20" height="20"><use href="#lock"/></svg><svg width="20" height="20"><use href="#lock"/></svg></div>
            </div>
            <div class="mt-[8px] h-[18px] flex items-center">Dimensions:</div>
            <div class="mt-[5px] rounded-[5px] overflow-hidden flex flex-col gap-[1px] text-[#e6e6e6]">
              <div class="h-[25px] bg-[#545454] flex items-center justify-between pl-[20px] pr-[18px]"><span>X</span><span>0.0211 m</span></div>
              <div class="h-[25px] bg-[#545454] flex items-center justify-between pl-[20px] pr-[18px]"><span>Y</span><span>0.0192 m</span></div>
              <div class="h-[25px] bg-[#545454] flex items-center justify-between pl-[20px] pr-[18px]"><span>Z</span><span>0.00234 m</span></div>
            </div>
          </div>
        </div>

        <!-- sidebar tabs (padding is logical here: in vertical writing, px-* pads top and bottom) -->
        <div class="absolute right-0 top-[68px] bottom-0 w-[28px] bg-[#1f1f1f] pt-[6px] pl-[2px] flex flex-col gap-[6px] items-start text-[#c8c8c8]">
          <div class="w-[24px] px-[10.500px] rounded-r-[5px] bg-[#3b3b3b] flex items-center justify-center [writing-mode:vertical-rl] text-[#f0f0f0]">Item</div>
          <div class="w-[24px] px-[10.500px] rounded-r-[5px] bg-[#262626] border-r border-[#3a3a3a] flex items-center justify-center [writing-mode:vertical-rl]">Tool</div>
          <div class="w-[24px] px-[10.500px] rounded-r-[5px] bg-[#262626] border-r border-[#3a3a3a] flex items-center justify-center [writing-mode:vertical-rl]">View</div>
          <div class="w-[24px] px-[10.500px] rounded-r-[5px] bg-[#262626] border-r border-[#3a3a3a] flex items-center justify-center [writing-mode:vertical-rl]">3D-Print</div>
          <div class="w-[24px] px-[10.500px] rounded-r-[5px] bg-[#262626] border-r border-[#3a3a3a] flex items-center justify-center [writing-mode:vertical-rl]">Edit</div>
          <div class="w-[24px] px-[10.500px] rounded-r-[5px] bg-[#262626] border-r border-[#3a3a3a] flex items-center justify-center [writing-mode:vertical-rl]">Animate</div>
          <div class="w-[24px] px-[10.500px] rounded-r-[5px] bg-[#262626] border-r border-[#3a3a3a] flex items-center justify-center [writing-mode:vertical-rl]">PDT</div>
          <div class="w-[24px] px-[10.500px] rounded-r-[5px] bg-[#262626] border-r border-[#3a3a3a] flex items-center justify-center [writing-mode:vertical-rl]">Create</div>
          <div class="w-[24px] px-[10.500px] rounded-r-[5px] bg-[#262626] border-r border-[#3a3a3a] flex items-center justify-center [writing-mode:vertical-rl]">Animation</div>
          <div class="w-[24px] px-[10.500px] rounded-r-[5px] bg-[#262626] border-r border-[#3a3a3a] flex items-center justify-center [writing-mode:vertical-rl]">Grease Pencil</div>
          <div class="w-[24px] px-[10.500px] rounded-r-[5px] bg-[#262626] border-r border-[#3a3a3a] flex items-center justify-center [writing-mode:vertical-rl]">PowerSave</div>
          <div class="w-[24px] px-[10.500px] rounded-r-[5px] bg-[#262626] border-r border-[#3a3a3a] flex items-center justify-center [writing-mode:vertical-rl]">Quad Remesh</div>
          <div class="w-[24px] px-[10.500px] rounded-r-[5px] bg-[#262626] border-r border-[#3a3a3a] flex items-center justify-center [writing-mode:vertical-rl]">Realtime Materials</div>
          <div class="w-[24px] px-[10.500px] rounded-r-[5px] bg-[#262626] border-r border-[#3a3a3a] flex items-center justify-center [writing-mode:vertical-rl]">Screencast Keys</div>
          <div class="w-[24px] px-[10.500px] rounded-r-[5px] bg-[#262626] border-r border-[#3a3a3a] flex items-center justify-center [writing-mode:vertical-rl]">BlenderKit</div>
        </div>

        <!-- popup -->
        <div class="absolute left-[2168px] top-[759px] w-[237px] h-[73px] rounded-[4px] bg-[#181818] flex flex-col">
          <div class="h-[37px] flex items-center pl-[9px] text-[#a4a4a4] border-b border-[#2e2e2e]"><svg width="18" height="18" viewBox="0 0 20 20"><circle cx="10" cy="10" r="8.500" fill="none" stroke="#a4a4a4" stroke-width="1.500"/><text x="10" y="14.500" text-anchor="middle" font-family="Inter" font-size="13" font-weight="700" fill="#a4a4a4">?</text></svg><span class="ml-[8px]">OK?</span></div>
          <div class="mt-[5px] mx-[3px] h-[24px] rounded-[5px] bg-[#4d72ae] flex items-center pl-[41px] pr-[6px] text-white"><span><span class="underline">D</span>elete</span><span class="ml-auto text-[#b8c4d8]">X</span></div>
        </div>
      </div>

      <!-- timeline -->
      <div class="flex-1 min-h-0 flex flex-col rounded-t-[6px] overflow-hidden">
        <div class="relative h-[33px] shrink-0 bg-[#333333] flex items-start pt-[4px]">
          <div class="ml-[10px] w-[41px] h-[26px] rounded-[5px] bg-[#282828] flex items-center justify-center"><svg width="20" height="20"><use href="#action"/></svg><svg class="-ml-[1px]" width="12" height="12"><use href="#chev"/></svg></div>
          <div class="ml-[7px] w-[177px] h-[26px] rounded-[5px] bg-[#282828] flex overflow-hidden"><span class="w-[97px] flex items-center pl-[10px] border-r border-[#3c3c3c]">Playback<svg class="ml-auto mr-[1px]" width="12" height="12"><use href="#chev"/></svg></span><span class="flex-1 flex items-center pl-[10px]">Keying<svg class="ml-auto mr-[1px]" width="12" height="12"><use href="#chev"/></svg></span></div>
          <span class="ml-[14px] mt-[6px]">View</span>
          <span class="ml-[20px] mt-[6px]">Marker</span>
          <div class="absolute left-[1521px] top-[4px] w-[51px] h-[26px] rounded-[5px] bg-[#282828] flex overflow-hidden"><span class="w-[25px] bg-[#545454] flex items-center justify-center"><svg width="16" height="16" viewBox="0 0 20 20"><circle cx="10" cy="10" r="8" fill="none" stroke="#b4b4b4" stroke-width="1.800"/></svg></span><span class="flex-1 flex items-center justify-center text-[#777]"><svg width="12" height="12"><use href="#chev"/></svg></span></div>
          <div class="absolute left-[1580px] top-[4px] w-[157px] h-[26px] rounded-[5px] bg-[#545454] flex overflow-hidden divide-x divide-[#3c3c3c] text-[#e6e6e6]">
            <span class="flex-1 flex items-center justify-center"><svg width="18" height="18" viewBox="0 0 20 20" fill="currentColor"><path d="M4 3h2.500v14H4zM16 3L7 10l9 7z"/></svg></span>
            <span class="flex-1 flex items-center justify-center"><svg width="20" height="18" viewBox="0 0 22 20" fill="currentColor"><path d="M8 2l6 8-6 8-6-8zM21 4v12l-5-6z"/></svg></span>
            <span class="flex-1 flex items-center justify-center"><svg width="16" height="18" viewBox="0 0 20 20" fill="currentColor"><path d="M16 1v18L3 10z"/></svg></span>
            <span class="flex-1 flex items-center justify-center"><svg width="16" height="18" viewBox="0 0 20 20" fill="currentColor"><path d="M4 1v18l13-9z"/></svg></span>
            <span class="flex-1 flex items-center justify-center"><svg width="20" height="18" viewBox="0 0 22 20" fill="currentColor"><path d="M1 4v12l5-6zM14 2l6 8-6 8-6-8z"/></svg></span>
            <span class="flex-1 flex items-center justify-center"><svg width="18" height="18" viewBox="0 0 20 20" fill="currentColor"><path d="M14 3h2.500v14H14zM4 3l9 7-9 7z"/></svg></span>
          </div>
          <div class="absolute left-[2915px] top-[4px] w-[97px] h-[26px] rounded-[5px] bg-[#545454] flex items-center justify-center text-[#e6e6e6]">1</div>
          <div class="absolute left-[3020px] top-[4px] w-[256px] h-[26px] rounded-[5px] bg-[#545454] flex overflow-hidden divide-x divide-[#3c3c3c] text-[#e6e6e6]">
            <span class="w-[25px] flex items-center justify-center"><svg width="19" height="21" viewBox="0 0 20 22"><circle cx="10" cy="13" r="7.500" fill="none" stroke="currentColor" stroke-width="1.300"/><path d="M10 8v5h4M7 2.500h6M10 2.500V5M16 5l2-2" fill="none" stroke="currentColor" stroke-width="1.300"/></svg></span>
            <span class="w-[118px] flex items-center justify-between pl-[20px] pr-[19px]"><span>Start</span><span>1</span></span>
            <span class="flex-1 flex items-center justify-between pl-[21px] pr-[17px]"><span>End</span><span>250</span></span>
          </div>
        </div>
        <div class="flex-1 min-h-0 flex">
          <!-- channels -->
          <div class="w-[267px] shrink-0 bg-[#1c1c1c] flex flex-col">
            <div class="ml-[2px] mt-[4px] w-[263px] h-[24px] rounded-[5px] bg-[#282828] border border-[#3a3a3a] flex overflow-hidden">
              <span class="flex-1 bg-[#1c1c1c] flex items-center pl-[3px] text-[#747474]"><svg class="text-[#dedede]" width="20" height="20"><use href="#search"/></svg><span class="ml-[5px]">Search</span></span>
              <span class="w-[30px] bg-[#545454] flex items-center justify-center"><svg width="20" height="14" viewBox="0 0 20 14"><path d="M2 7h16M6 2L2 7l4 5M14 2l4 5-4 5M2 2v10M18 2v10" fill="none" stroke="#d8d8d8" stroke-width="1.200"/></svg></span>
            </div>
            <div class="mt-[6px] h-[22px] bg-[#4b2a2a] flex items-center pl-[2px] text-[#c8c8c8]"><svg class="text-[#e0e0e0]" width="15" height="15"><use href="#chev"/></svg><span class="ml-[5px]">Summary</span></div>
          </div>
          <!-- dopesheet -->
          <div class="relative flex-1 flex flex-col min-w-0 bg-[#1c1c1c]">
            <div class="h-[31px] shrink-0 flex items-center pl-[157.900px] text-[#aeaeae]">
              <span class="w-[112.240px] shrink-0 text-center">10</span><span class="w-[112.240px] shrink-0 text-center">20</span><span class="w-[112.240px] shrink-0 text-center">30</span><span class="w-[112.240px] shrink-0 text-center">40</span><span class="w-[112.240px] shrink-0 text-center">50</span><span class="w-[112.240px] shrink-0 text-center">60</span><span class="w-[112.240px] shrink-0 text-center">70</span><span class="w-[112.240px] shrink-0 text-center">80</span><span class="w-[112.240px] shrink-0 text-center">90</span><span class="w-[112.240px] shrink-0 text-center">100</span><span class="w-[112.240px] shrink-0 text-center">110</span><span class="w-[112.240px] shrink-0 text-center">120</span><span class="w-[112.240px] shrink-0 text-center">130</span><span class="w-[112.240px] shrink-0 text-center">140</span><span class="w-[112.240px] shrink-0 text-center">150</span><span class="w-[112.240px] shrink-0 text-center">160</span><span class="w-[112.240px] shrink-0 text-center">170</span><span class="w-[112.240px] shrink-0 text-center">180</span><span class="w-[112.240px] shrink-0 text-center">190</span><span class="w-[112.240px] shrink-0 text-center">200</span><span class="w-[112.240px] shrink-0 text-center">210</span><span class="w-[112.240px] shrink-0 text-center">220</span><span class="w-[112.240px] shrink-0 text-center">230</span><span class="w-[112.240px] shrink-0 text-center">240</span><span class="w-[112.240px] shrink-0 text-center">250</span>
            </div>
            <svg class="flex-1 block" width="3020" height="349">
              <defs><pattern id="tg" width="112.24" height="20" patternUnits="userSpaceOnUse" x="101.7"><rect width="112.24" height="20" fill="#303030"/><rect x="0" width="1.400" height="20" fill="#191919"/><rect x="56.120" width="1" height="20" fill="#272727"/></pattern></defs>
              <rect width="3020" height="349" fill="url(#tg)"/>
              <rect width="112.900" height="349" fill="#000" opacity=".27"/>
              <rect x="2907.700" width="113" height="349" fill="#000" opacity=".27"/>
            </svg>
            <div class="absolute left-[112px] top-[23px] bottom-0 w-[2px] bg-[#4a74b8]"></div>
            <div class="absolute left-[97px] top-[4px] w-[31.500px] h-[23px] rounded-[6px] bg-[#4772b3] flex items-center justify-center text-white">1</div>
            <div class="absolute left-[16px] bottom-[3px] w-[2992px] h-[11px] rounded-full bg-[#565656] flex justify-end"><span class="w-[7px] h-[11px] rounded-full bg-[#333]"></span></div>
            <div class="absolute left-[3014px] top-[13px] h-[340px] w-[4px] rounded-full bg-[#3c3c3c]"></div>
          </div>
        </div>
      </div>
    </div>

    <!-- right column -->
    <div class="ml-[3px] flex-1 min-w-0 flex flex-col gap-[4px]">
      <!-- outliner -->
      <div class="h-[546px] shrink-0 rounded-[6px] overflow-hidden flex flex-col bg-[#2b2b2b]">
        <div class="h-[34px] shrink-0 relative bg-[#2c2c2c]">
          <div class="absolute left-[11px] top-[3px] w-[41px] h-[27px] rounded-[5px] bg-[#262626] border border-[#3a3a3a] flex items-center justify-center"><svg width="19" height="19"><use href="#tree"/></svg><svg class="-ml-[1px]" width="11" height="11"><use href="#chev"/></svg></div>
          <div class="absolute left-[59px] top-[3px] w-[41px] h-[27px] rounded-[5px] bg-[#262626] border border-[#3a3a3a] flex items-center justify-center"><svg width="19" height="19"><use href="#layer"/></svg><svg class="-ml-[1px]" width="11" height="11"><use href="#chev"/></svg></div>
          <div class="absolute left-[253px] top-[3px] w-[153px] h-[27px] rounded-[5px] bg-[#1c1c1c] border border-[#383838] flex items-center pl-[2px] text-[#727272]"><svg class="text-[#dcdcdc]" width="20" height="20"><use href="#search"/></svg><span class="ml-[6px]">Search</span></div>
          <div class="absolute left-[604px] top-[3px] w-[41px] h-[27px] rounded-[5px] bg-[#262626] border border-[#3a3a3a] flex items-center justify-center"><svg width="20" height="21"><use href="#funnelo"/></svg><svg class="-ml-[1px]" width="11" height="11"><use href="#chev"/></svg></div>
          <div class="absolute left-[652px] top-[3px] w-[24px] h-[27px] rounded-[5px] bg-[#505050] flex items-center justify-center text-[#bbb]"><svg width="21" height="21"><use href="#newcoll"/></svg></div>
        </div>
        <div class="flex flex-col relative">
          <div class="absolute left-[38px] top-[85px] h-[67px] w-px bg-[#4a4a4a]"></div>
          <div class="h-[26.400px] bg-[#282828] flex items-center pl-[26px]"><span class="w-[26px] h-[26px] rounded-[6px] bg-[#444] flex items-center justify-center"><svg width="20" height="20"><use href="#coll"/></svg></span><span class="ml-[6px] text-[#d4d4d4]">Scene Collection</span></div>
          <div class="h-[26.400px] bg-[#2b2b2b] flex items-center pl-[56px]"><svg width="20" height="20"><use href="#coll"/></svg><span class="ml-[8px] text-[#d4d4d4]">Collection</span><span class="ml-auto flex gap-[6.400px] pr-[16px]"><svg width="20" height="20"><use href="#check"/></svg><svg width="20" height="20"><use href="#eye"/></svg><svg width="20" height="20"><use href="#cam"/></svg></span></div>
          <div class="h-[26.400px] bg-[#282828] flex items-center pl-[31px]"><svg class="text-[#aaa]" width="16" height="16"><use href="#chev"/></svg><svg class="ml-[9px]" width="20" height="20"><use href="#coll"/></svg><span class="ml-[8px] text-[#d4d4d4]">Blender_logo_no_text.svg</span><span class="ml-auto flex gap-[6.400px] pr-[16px]"><svg width="20" height="20"><use href="#check"/></svg><svg width="20" height="20"><use href="#eye"/></svg><svg width="20" height="20"><use href="#cam"/></svg></span></div>
          <div class="h-[26.400px] bg-[#2b2b2b] flex items-center pl-[58px]"><svg class="text-[#aaa]" width="16" height="16"><use href="#chevr"/></svg><svg class="ml-[8px] text-[#bd8148]" width="20" height="20"><use href="#mesh"/></svg><span class="ml-[9px] w-[105px] text-[#d4d4d4]">Curve.001</span><svg class="text-[#3fb58f]" width="20" height="20"><use href="#data"/></svg><span class="ml-auto flex gap-[6.400px] pr-[16px]"><svg width="20" height="20"><use href="#eye"/></svg><svg width="20" height="20"><use href="#cam"/></svg></span></div>
          <div class="h-[26.400px] bg-[#282828] flex items-center pl-[58px]"><svg class="text-[#aaa]" width="16" height="16"><use href="#chevr"/></svg><svg class="ml-[8px] text-[#bd8148]" width="20" height="20"><use href="#mesh"/></svg><span class="ml-[9px] w-[105px] text-[#d4d4d4]">Curve.002</span><svg class="text-[#5f83c7]" width="20" height="20"><use href="#wrencho"/></svg><svg class="ml-[6px] text-[#3fb58f]" width="20" height="20"><use href="#data"/></svg><span class="ml-auto flex gap-[6.400px] pr-[16px]"><svg width="20" height="20"><use href="#eye"/></svg><svg width="20" height="20"><use href="#cam"/></svg></span></div>
          <div class="h-[26.400px] bg-[#344d7b] flex items-center pl-[58px]"><svg class="text-[#aaa]" width="16" height="16"><use href="#chevr"/></svg><span class="ml-[4px] w-[26px] h-[26px] rounded-[6px] bg-[#6d7fa0] flex items-center justify-center -mr-[2px]"><svg class="text-[#bd8148]" width="20" height="20"><use href="#mesh"/></svg></span><span class="ml-[7px] w-[105px] text-[#f5a93a]">Curve.003</span><svg class="text-[#3fb58f]" width="20" height="20"><use href="#data"/></svg><span class="ml-auto flex gap-[6.400px] pr-[16px]"><svg width="20" height="20"><use href="#eye"/></svg><svg width="20" height="20"><use href="#cam"/></svg></span></div>
          <div class="h-[26.400px] bg-[#2b2b2b] flex items-center pl-[31px]"><svg class="text-[#777]" width="16" height="16"><use href="#chevr"/></svg><svg class="ml-[9px] text-[#bd8148]" width="20" height="20"><use href="#mesh"/></svg><span class="ml-[8px] w-[69px] text-[#7e7e7e]">Plane</span><svg class="text-[#3f5586]" width="20" height="20"><use href="#wrencho"/></svg><svg class="ml-[7px] text-[#2b6e58]" width="20" height="20"><use href="#data"/></svg><span class="ml-auto flex gap-[6.400px] pr-[16px] items-center"><svg class="text-[#888]" width="20" height="20"><use href="#eyeh"/></svg><svg width="20" height="20"><use href="#cam"/></svg></span></div>
          <div class="h-[26.400px] bg-[#282828] flex items-center pl-[31px]"><svg class="text-[#777]" width="16" height="16"><use href="#chevr"/></svg><svg class="ml-[9px] text-[#bd8148]" width="20" height="20"><use href="#mesh"/></svg><span class="ml-[8px] w-[102px] text-[#7e7e7e]">Plane.001</span><svg class="text-[#2b6e58]" width="20" height="20"><use href="#data"/></svg><span class="ml-auto flex gap-[6.400px] pr-[16px] items-center"><svg class="text-[#888]" width="20" height="20"><use href="#eyeh"/></svg><svg width="20" height="20"><use href="#cam"/></svg></span></div>
          <div class="h-[26.400px] bg-[#2b2b2b]"></div><div class="h-[26.400px] bg-[#282828]"></div><div class="h-[26.400px] bg-[#2b2b2b]"></div><div class="h-[26.400px] bg-[#282828]"></div><div class="h-[26.400px] bg-[#2b2b2b]"></div><div class="h-[26.400px] bg-[#282828]"></div><div class="h-[26.400px] bg-[#2b2b2b]"></div><div class="h-[26.400px] bg-[#282828]"></div><div class="h-[26.400px] bg-[#2b2b2b]"></div><div class="h-[26.400px] bg-[#282828]"></div><div class="h-[26.400px] bg-[#2b2b2b]"></div>
        </div>
      </div>

      <!-- properties -->
      <div class="flex-1 min-h-0 rounded-t-[6px] overflow-hidden flex flex-col bg-[#2f2f2f]">
        <div class="h-[33px] shrink-0 relative bg-[#303030]">
          <div class="absolute left-[11px] top-[3px] w-[41px] h-[26px] rounded-[5px] bg-[#262626] border border-[#3a3a3a] flex items-center justify-center"><svg width="20" height="20"><use href="#toggles"/></svg><svg class="-ml-[1px]" width="12" height="12"><use href="#chev"/></svg></div>
          <div class="absolute left-[268px] top-[3px] w-[155px] h-[26px] rounded-[5px] bg-[#1c1c1c] border border-[#383838] flex items-center pl-[6px] text-[#727272]"><svg class="text-[#dcdcdc]" width="20" height="20"><use href="#search"/></svg><span class="ml-[8px]">Search</span></div>
          <div class="absolute left-[652px] top-[3px] w-[26px] h-[26px] rounded-[5px] bg-[#262626] border border-[#3a3a3a] flex items-center justify-center"><svg width="13" height="13"><use href="#chev"/></svg></div>
        </div>
        <div class="flex-1 min-h-0 flex">
          <div class="w-[39px] shrink-0 bg-[#1c1c1c] flex flex-col pl-[4px] text-[#c4c4c4]">
            <span class="mt-[9.500px] h-[37px] flex items-center justify-center"><svg width="21" height="21"><use href="#tool"/></svg></span>
            <span class="mt-[10px] h-[37px] flex items-center justify-center"><svg width="21" height="21"><use href="#rprop"/></svg></span>
            <span class="h-[37px] flex items-center justify-center"><svg width="21" height="21"><use href="#output"/></svg></span>
            <span class="h-[37px] flex items-center justify-center"><svg width="21" height="21"><use href="#layer"/></svg></span>
            <span class="h-[37px] flex items-center justify-center"><svg width="21" height="21"><use href="#scene"/></svg></span>
            <span class="h-[37px] flex items-center justify-center text-[#a0535a]"><svg width="21" height="21"><use href="#world"/></svg></span>
            <span class="mt-[10px] h-[37px] flex items-center justify-center text-[#b98050]"><svg width="21" height="21"><use href="#obj"/></svg></span>
            <span class="h-[35px] -ml-[4px] rounded-l-[5px] bg-[#2f2f2f] flex items-center justify-center text-[#6e96e8] pl-[4px]"><svg width="21" height="21"><use href="#wrench"/></svg></span>
            <span class="h-[37px] flex items-center justify-center text-[#4a6ea8]"><svg width="21" height="21"><use href="#particles"/></svg></span>
            <span class="h-[37px] flex items-center justify-center text-[#4f78bd]"><svg width="21" height="21"><use href="#physics"/></svg></span>
            <span class="h-[37px] flex items-center justify-center text-[#4f78bd]"><svg width="21" height="21"><use href="#constr"/></svg></span>
            <span class="h-[37px] flex items-center justify-center text-[#3fb58f]"><svg width="21" height="21"><use href="#data"/></svg></span>
            <span class="h-[37px] flex items-center justify-center text-[#a0535a]"><svg width="21" height="21"><use href="#mat"/></svg></span>
            <span class="mt-[11px] h-[37px] flex items-center justify-center text-[#a0535a]"><svg width="21" height="21"><use href="#checker"/></svg></span>
          </div>
          <div class="flex-1 min-w-0 pl-[10px] pr-[11px]">
            <div class="h-[46px] flex items-center text-[#e4e4e4]"><svg class="text-[#cfcfcf] ml-[3px]" width="21" height="21"><use href="#obj"/></svg><span class="ml-[11px]">Curve.003</span><svg class="ml-auto mr-[1px] text-[#999]" width="21" height="21"><use href="#pin"/></svg></div>
            <div class="mt-[12px] relative h-[25px] rounded-[5px] bg-[#545454] border border-[#5e5e5e] flex items-center justify-center pl-[24px] text-[#e6e6e6]"><span class="absolute left-[9px] text-[18px] font-light">+</span>Add Modifier</div>
          </div>
        </div>
      </div>
    </div>
  </div>

  <!-- status bar -->
  <div class="h-[28px] shrink-0 bg-[#171717] flex items-center text-[#9a9a9a] pl-[18px] pr-[16px]">
    <svg class="text-[#bdbdbd]" width="13" height="18" viewBox="0 0 20 28"><use href="#mouse"/></svg><span class="ml-[13px] w-[262px] text-[#bcbcbc]">Select</span>
    <svg class="text-[#bdbdbd]" width="13" height="18" viewBox="0 0 20 28"><use href="#mouse"/></svg><span class="ml-[13px] w-[266px] text-[#bcbcbc]">Rotate View</span>
    <svg class="text-[#bdbdbd]" width="13" height="18" viewBox="0 0 20 28"><use href="#mouse"/></svg><span class="ml-[13px] text-[#bcbcbc]">Object</span>
    <span class="ml-auto tracking-[0.4px]">Scene Collection | Curve.003 | Verts:232 | Faces:45 | Tris:284 | Objects:1/3 | Duration: 00:08+10 (Frame 1/250) | Memory: 201.0 MiB | 4.1.1</span>
  </div>
</div>
</body></html>
